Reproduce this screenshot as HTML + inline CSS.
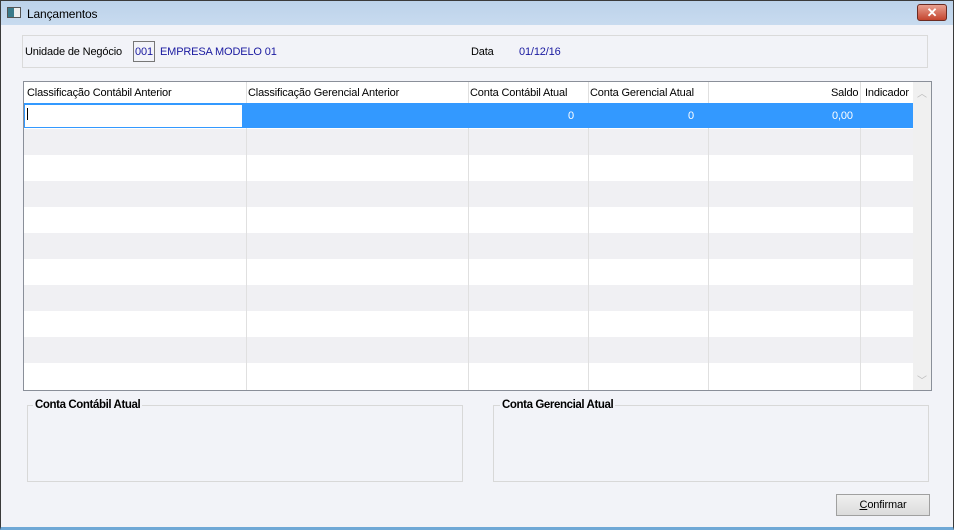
<!DOCTYPE html>
<html><head><meta charset="utf-8"><style>
*{margin:0;padding:0;box-sizing:border-box}
body{width:954px;height:530px;overflow:hidden;font-family:"Liberation Sans",sans-serif;font-size:11px;background:#f2f3f8;position:relative;letter-spacing:-0.15px}
.a{position:absolute}
</style></head><body>
<div class="a" style="left:0;top:0;width:954px;height:530px;border:1px solid #3a3a3a;border-bottom:3px solid #6fa8d6;background:#f2f3f8"></div>
<div class="a" style="left:1px;top:1px;width:952px;height:24px;background:linear-gradient(#bcd2ea,#c8dbef)"></div>
<div class="a" style="left:7px;top:7px;width:14px;height:11px;border:1px solid #555;background:linear-gradient(90deg,#3a7a8a 50%,#eee 50%)"></div>
<div class="a" style="left:27px;top:7px;font-size:12px;color:#000">Lançamentos</div>
<div class="a" style="left:917px;top:4px;width:30px;height:17px;border:1px solid #6b2b22;border-radius:3px;background:linear-gradient(#e8a090,#c4452f);color:#fff;font-weight:bold;font-size:13px;text-align:center;line-height:15px">✕</div>
<div class="a" style="left:22px;top:35px;width:906px;height:33px;border:1px solid #dadada"></div>
<div class="a" style="left:25px;top:46px">Unidade de Negócio</div>
<div class="a" style="left:133px;top:41px;width:22px;height:21px;border:1px solid #777;color:#1a1aa0;text-align:center;line-height:20px">001</div>
<div class="a" style="left:160px;top:46px;color:#1a1aa0">EMPRESA MODELO 01</div>
<div class="a" style="left:471px;top:46px">Data</div>
<div class="a" style="left:519px;top:46px;color:#1a1aa0">01/12/16</div>
<div class="a" style="left:23px;top:81px;width:909px;height:310px;border:1px solid #8a8f99;background:#fff;overflow:hidden">
<div class="a" style="left:0;top:21px;width:889px;height:25px;background:#3399ff"></div>
<div class="a" style="left:1px;top:23px;width:217px;height:22px;background:#fff"></div>
<div class="a" style="left:3px;top:26px;width:1px;height:12px;background:#000"></div>
<div class="a" style="left:0;top:47px;width:889px;height:26px;background:#f0f0f3"></div>
<div class="a" style="left:0;top:99px;width:889px;height:26px;background:#f0f0f3"></div>
<div class="a" style="left:0;top:151px;width:889px;height:26px;background:#f0f0f3"></div>
<div class="a" style="left:0;top:203px;width:889px;height:26px;background:#f0f0f3"></div>
<div class="a" style="left:0;top:255px;width:889px;height:26px;background:#f0f0f3"></div>
<div class="a" style="left:222px;top:0;width:1px;height:21px;background:#e0e0e0"></div>
<div class="a" style="left:444px;top:0;width:1px;height:21px;background:#e0e0e0"></div>
<div class="a" style="left:564px;top:0;width:1px;height:21px;background:#e0e0e0"></div>
<div class="a" style="left:684px;top:0;width:1px;height:21px;background:#e0e0e0"></div>
<div class="a" style="left:836px;top:0;width:1px;height:21px;background:#e0e0e0"></div>
<div class="a" style="left:222px;top:46px;width:1px;height:270px;background:#e0e0e0"></div>
<div class="a" style="left:444px;top:46px;width:1px;height:270px;background:#e0e0e0"></div>
<div class="a" style="left:564px;top:46px;width:1px;height:270px;background:#e0e0e0"></div>
<div class="a" style="left:684px;top:46px;width:1px;height:270px;background:#e0e0e0"></div>
<div class="a" style="left:836px;top:46px;width:1px;height:270px;background:#e0e0e0"></div>
<div class="a" style="left:3px;top:5px">Classificação Contábil Anterior</div>
<div class="a" style="left:224px;top:5px">Classificação Gerencial Anterior</div>
<div class="a" style="left:446px;top:5px">Conta Contábil Atual</div>
<div class="a" style="left:566px;top:5px">Conta Gerencial Atual</div>
<div class="a" style="left:807px;top:5px">Saldo</div>
<div class="a" style="left:841px;top:5px">Indicador</div>
<div class="a" style="left:544px;top:28px;color:#fff">0</div>
<div class="a" style="left:664px;top:28px;color:#fff">0</div>
<div class="a" style="left:808px;top:28px;color:#fff">0,00</div>
<div class="a" style="left:889px;top:0;width:19px;height:308px;background:#f0f0f0"></div>
<div class="a" style="left:893px;top:3px;color:#bbb;font-size:10px">︿</div>
<div class="a" style="left:893px;top:290px;color:#bbb;font-size:10px">﹀</div>
</div>
<div class="a" style="left:27px;top:405px;width:436px;height:77px;border:1px solid #d8d8d8"></div>
<div class="a" style="left:33px;top:399px;font-weight:bold;font-size:11.5px;letter-spacing:-0.4px;background:#f2f3f8;padding:0 2px">Conta Contábil Atual</div>
<div class="a" style="left:493px;top:405px;width:436px;height:77px;border:1px solid #d8d8d8"></div>
<div class="a" style="left:500px;top:399px;font-weight:bold;font-size:11.5px;letter-spacing:-0.4px;background:#f2f3f8;padding:0 2px">Conta Gerencial Atual</div>
<div class="a" style="left:836px;top:494px;width:94px;height:22px;border:1px solid #a0a0a0;background:linear-gradient(#f0f0f0,#dcdcdc);text-align:center;line-height:20px"><u>C</u>onfirmar</div>
</body></html>
